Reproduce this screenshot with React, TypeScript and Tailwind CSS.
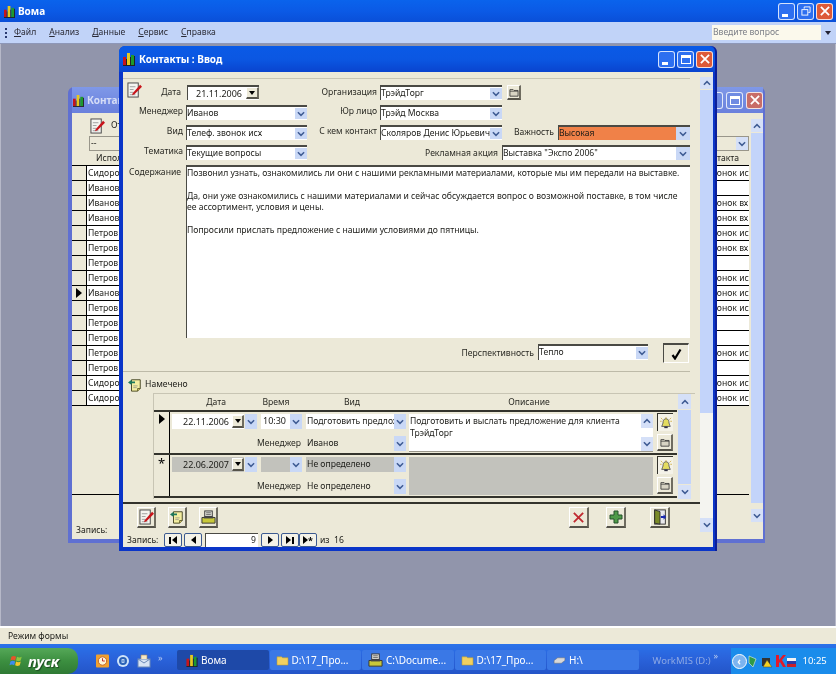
import type { ReactNode } from "react";

function AppIcon({ className = "" }: { className?: string }) {
  return (
    <svg viewBox="0 0 12 14" className={className}>
      <rect x="0" y="13" width="12" height="1" fill="#222" />
      <rect x="0" y="5" width="3" height="8" fill="#c8141a" />
      <rect x="3" y="7" width="1" height="6" fill="#222" />
      <rect x="4" y="1" width="3" height="12" fill="#e8c81c" />
      <rect x="7" y="5" width="1" height="8" fill="#222" />
      <rect x="8" y="3" width="3" height="10" fill="#1e9a2c" />
      <rect x="11" y="4" width="1" height="9" fill="#222" />
    </svg>
  );
}

function Chevron({ up = false, color = "#3f5c94" }: { up?: boolean; color?: string }) {
  return (
    <svg viewBox="0 0 9 6" className="w-[8px] h-[6px]">
      <path d={up ? "M1 5 L4.5 1.5 L8 5" : "M1 1 L4.5 4.5 L8 1"} fill="none" stroke={color} strokeWidth="1.7" />
    </svg>
  );
}

function PencilIcon() {
  return (
    <svg viewBox="0 0 16 17" className="w-[15px] h-[16px]">
      <rect x="1" y="1" width="11" height="15" fill="#f4f4f0" stroke="#444" strokeWidth="1" />
      <path d="M3 5h6M3 8h4M3 11h4M3 13.5h6" stroke="#888" strokeWidth="0.8" />
      <path d="M6 12 L14 3 L16 5 L8 13 L5.5 14 Z" fill="#c8141a" />
    </svg>
  );
}

function NoteIcon() {
  return (
    <svg viewBox="0 0 16 16" className="w-[14px] h-[14px]">
      <path d="M4 2h10v10l-3 3H4z" fill="#f4eea0" stroke="#3a3a1a" strokeWidth="1" />
      <path d="M11 15v-3h3" fill="#d8c860" stroke="#3a3a1a" strokeWidth="0.8" />
      <path d="M0 5l4-3v2h4v2H4v2z" fill="#1e7a5c" />
      <path d="M6 9h5M6 11h4" stroke="#888" strokeWidth="0.8" />
    </svg>
  );
}

function PrinterIcon() {
  return (
    <svg viewBox="0 0 16 16" className="w-[15px] h-[15px] shrink-0">
      <rect x="4" y="1" width="8" height="6" fill="#e8e8e0" stroke="#333" />
      <path d="M5.5 3h5M5.5 5h5" stroke="#333" strokeWidth="0.8" />
      <path d="M1 8h14v6H1z" fill="#c8c83a" stroke="#333" />
      <rect x="3" y="7" width="10" height="2" fill="#444" />
    </svg>
  );
}

function FolderIcon() {
  return (
    <svg viewBox="0 0 12 11" className="w-[10px] h-[9px]">
      <path d="M1 2h4l1 1h5v7H1z" fill="#d8d4c4" stroke="#333" strokeWidth="1" />
      <path d="M1 4h10" stroke="#333" strokeWidth="0.8" />
    </svg>
  );
}

function BellIcon() {
  return (
    <svg viewBox="0 0 14 14" className="w-[12px] h-[12px]">
      <path d="M7 2c3 0 3.500 3 3.500 5 0 1.500 1.500 3 1.500 4H2c0-1 1.500-2.500 1.500-4C3.500 5 4 2 7 2z" fill="#e4dc60" stroke="#445" strokeWidth="0.9" />
      <path d="M1 1l2 2M13 1l-2 2M7 0v2M0 5h2M12 5h2" stroke="#c8a020" strokeWidth="0.8" />
      <rect x="5" y="11" width="4" height="2" fill="#334" />
    </svg>
  );
}

function DoorIcon() {
  return (
    <svg viewBox="0 0 18 18" className="w-[16px] h-[16px]">
      <rect x="3" y="1" width="12" height="16" fill="#e8e8ec" stroke="#2a2a2a" />
      <path d="M3 1l6 2v14l-6-1z" fill="#7a8a28" stroke="#2a2a2a" />
      <path d="M10 8h3V6l3 3-3 3v-2h-3z" fill="#1a2ab0" />
    </svg>
  );
}

function RaisedBtn({ className, children }: { className: string; children: ReactNode }) {
  return (
    <div className={`flex items-center justify-center bg-[#ece9d8] border-t border-l border-t-white border-l-white border-r-2 border-b-2 border-r-[#6f6c60] border-b-[#55534a] ${className}`}>
      {children}
    </div>
  );
}

function Combo({ className, value }: { className: string; value?: string }) {
  return (
    <div className={`flex shrink-0 border-t-2 border-l border-[#4a4a44] bg-white ${className}`}>
      <span className="flex-1 min-w-0 overflow-hidden whitespace-nowrap leading-[13px]">{value}</span>
      <span className="w-[12px] my-[1px] flex items-center justify-center bg-[#c9d8f6]">
        <Chevron />
      </span>
    </div>
  );
}

function DateField({ value, className, fill = "bg-white" }: { value: string; className: string; fill?: string }) {
  return (
    <div className={`flex shrink-0 items-center ${fill} ${className}`}>
      <span className="flex-1 text-right pr-[3px] text-[9px]">{value}</span>
      <RaisedBtn className="w-[12px] h-[13px]">
        <span className="w-0 h-0 border-x-[3px] border-x-transparent border-t-[4px] border-t-black" />
      </RaisedBtn>
    </div>
  );
}

function Label({ className, children }: { className: string; children: ReactNode }) {
  return <div className={`shrink-0 text-right whitespace-nowrap text-[#2a2a24] ${className}`}>{children}</div>;
}

function TitleBtn({ kind, faded = false }: { kind: "min" | "max" | "restore" | "close"; faded?: boolean }) {
  const bg =
    kind === "close"
      ? faded
        ? "bg-[#c86d68]"
        : "bg-[#dd5a38]"
      : faded
        ? "bg-[#6f8be2]"
        : "bg-[#2d6ff0]";
  return (
    <div className={`w-[17px] h-[17px] rounded-[3px] border border-white/80 flex items-center justify-center shrink-0 ${bg}`}>
      {kind === "min" && <span className="w-[6px] h-[3px] bg-white self-end mb-[2px] mr-[4px]" />}
      {kind === "max" && <span className="w-[10px] h-[9px] border border-white border-t-[3px]" />}
      {kind === "restore" && (
        <svg viewBox="0 0 11 11" className="w-[10px] h-[10px]">
          <path d="M3.500 3V1h6.500v6H8" fill="none" stroke="#fff" />
          <rect x="1" y="4" width="6.500" height="6" fill="none" stroke="#fff" />
        </svg>
      )}
      {kind === "close" && (
        <svg viewBox="0 0 11 11" className="w-[10px] h-[10px]">
          <path d="M1 1l9 9M10 1l-9 9" stroke="#fff" strokeWidth="2" />
        </svg>
      )}
    </div>
  );
}

function ArrowBox({ up = false, className = "h-[13px]" }: { up?: boolean; className?: string }) {
  return (
    <div className={`w-[12px] flex items-center justify-center bg-[#d5e0f8] shrink-0 ${className}`}>
      <Chevron up={up} />
    </div>
  );
}

function NavBtn({ children }: { children: ReactNode }) {
  return (
    <div className="w-[18px] h-[14px] flex items-center justify-center rounded-[2px] border border-[#3c5a90] bg-[#f4f2e8] text-[9px] leading-none text-black font-bold">
      {children}
    </div>
  );
}

function NavPointer({ left = false, bar }: { left?: boolean; bar?: "before" | "after" }) {
  return (
    <span className="flex items-center gap-[1px]">
      {bar === "before" && <span className="w-[2px] h-[7px] bg-black" />}
      <span className={`w-0 h-0 border-y-[4px] border-y-transparent ${left ? "border-r-[5px] border-r-black" : "border-l-[5px] border-l-black"}`} />
      {bar === "after" && <span className="w-[2px] h-[7px] bg-black" />}
    </span>
  );
}

const backRows = [
  ["Сидоров", "Телеф. звонок исх"],
  ["Иванов", ""],
  ["Иванов", "Телеф. звонок вх"],
  ["Иванов", "Телеф. звонок вх"],
  ["Петров", "Телеф. звонок исх"],
  ["Петров", "Телеф. звонок вх"],
  ["Петров", ""],
  ["Петров", "Телеф. звонок исх"],
  ["Иванов", "Телеф. звонок исх"],
  ["Петров", "Телеф. звонок исх"],
  ["Петров", ""],
  ["Петров", ""],
  ["Петров", "Телеф. звонок исх"],
  ["Петров", ""],
  ["Сидоров", "Телеф. звонок исх"],
  ["Сидоров", "Телеф. звонок исх"],
];

function BackWindow() {
  return (
    <div className="absolute left-[67px] top-[43px] w-[697px] h-[456px] rounded-t-[6px] bg-[#5f70d2] pl-[4px] pr-[2px] pb-[4px] flex flex-col">
      <div className="h-[26px] flex items-center text-white/70 font-bold text-[10px] gap-[3px] bg-gradient-to-b from-[#7f98e8] to-[#6a80dc]">
        <AppIcon className="w-[11px] h-[13px] ml-[1px]" />
        <span className="flex-1">Контакты</span>
        <TitleBtn kind="min" faded />
        <TitleBtn kind="max" faded />
        <TitleBtn kind="close" faded />
      </div>
      <div className="flex-1 bg-[#ece9d8] flex">
        <div className="flex-1 min-w-0 flex flex-col mr-[2px]">
          <div className="pl-[18px] pt-[3px] flex items-center gap-[6px] h-[22px]">
            <PencilIcon />
            <span>От</span>
          </div>
          <div className="flex ml-[17px] mt-[1px] h-[15px] border border-[#99968a] bg-[#ece9d8]">
            <span className="flex-1 leading-[13px] pl-[1px]">--</span>
            <span className="w-[12px] flex items-center justify-center bg-[#d5e0f8]"><Chevron /></span>
          </div>
          <div className="flex h-[13px] mt-[1px] leading-[13px]">
            <span className="pl-[24px] flex-1">Исполнитель</span>
            <span className="w-[71px] text-right pr-[10px]">Вид контакта</span>
          </div>
          <div className="border-t border-t-black">
            {backRows.map(([name, call], i) => (
              <div key={i} className="flex h-[15px] border-b border-b-black bg-white leading-[14px]">
                <div className="w-[15px] bg-[#ece9d8] border-r border-r-black flex items-center justify-center">
                  {i === 8 && <span className="w-0 h-0 border-y-[5px] border-y-transparent border-l-[6px] border-l-black" />}
                </div>
                <div className="flex-1 pl-[1px]">{name}</div>
                <div className="w-[71px] overflow-hidden whitespace-nowrap">{call}</div>
              </div>
            ))}
          </div>
          <div className="flex-1 border-b border-b-black mb-[29px]" />
          <div className="pl-[4px] pb-[2px] leading-[13px]">Запись:</div>
        </div>
        <div className="w-[12px] mt-[6px] mb-[17px] flex flex-col">
          <ArrowBox up />
          <div className="flex-1 bg-[#c3d4fa] my-[1px]" />
          <div className="h-[5px]" />
          <ArrowBox />
        </div>
      </div>
    </div>
  );
}

function PlannedRow({
  marker,
  date,
  time,
  kind,
  manager,
  grey = false,
}: {
  marker: ReactNode;
  date: string;
  time?: string;
  kind: string;
  manager: string;
  grey?: boolean;
}) {
  const fill = grey ? "bg-[#c2c2bc]" : "bg-white";
  return (
    <div className="flex h-[43px] border-b-2 border-b-[#33332c]">
      <div className="w-[16px] border-r border-r-black flex justify-center pt-[2px]">{marker}</div>
      <div className="w-[238px] pl-[2px] pt-[2px] flex flex-col gap-[7px]">
        <div className="flex gap-[1px] h-[15px]">
          <DateField value={date} fill={fill} className="w-[72px]" />
          <span className="w-[12px] flex items-center justify-center bg-[#c9d8f6] shrink-0"><Chevron /></span>
          <div className={`flex w-[41px] ml-[3px] shrink-0 ${fill}`}>
            <span className="flex-1 pl-[2px] leading-[14px] text-[9px]">{time}</span>
            <span className="w-[12px] flex items-center justify-center bg-[#c9d8f6]"><Chevron /></span>
          </div>
          <div className={`flex w-[100px] ml-[3px] shrink-0 ${fill}`}>
            <span className="flex-1 min-w-0 overflow-hidden whitespace-nowrap pl-[1px] leading-[14px]">{kind}</span>
            <span className="w-[12px] flex items-center justify-center bg-[#c9d8f6]"><Chevron /></span>
          </div>
        </div>
        <div className="flex h-[15px] items-center">
          <Label className="w-[129px]">Менеджер</Label>
          <div className="flex w-[100px] ml-[5px] h-[15px] shrink-0 bg-[#ece9d8]">
            <span className="flex-1 min-w-0 pl-[1px] leading-[14px]">{manager}</span>
            <span className="w-[12px] flex items-center justify-center bg-[#c9d8f6]"><Chevron /></span>
          </div>
        </div>
      </div>
      <div className={`w-[244px] ml-[1px] mt-[2px] h-[38px] flex ${grey ? "bg-[#c2c2bc]" : "bg-white border-b border-b-[#99968a]"}`}>
        {!grey && (
          <>
            <p className="flex-1 pl-[1px] pt-[1px] leading-[12px]">
              Подготовить и выслать предложение для клиента
              <br />
              ТрэйдТорг
            </p>
            <div className="w-[12px] flex flex-col justify-between">
              <ArrowBox up className="h-[14px]" />
              <ArrowBox className="h-[14px]" />
            </div>
          </>
        )}
      </div>
      <div className="flex flex-col gap-[3px] ml-[4px] pt-[1px]">
        <div className="w-[16px] h-[18px] flex items-center justify-center border-t border-l border-[#33332c] bg-[#f4f2e8]">
          <BellIcon />
        </div>
        <RaisedBtn className="w-[16px] h-[17px]">
          <FolderIcon />
        </RaisedBtn>
      </div>
    </div>
  );
}

function MainWindow() {
  return (
    <div className="absolute left-[118px] top-[2px] w-[598px] h-[505px] rounded-t-[6px] bg-[#0a35c8] flex flex-col border-r-2 border-r-[#0c1f98] pl-[4px] pr-[2px] pb-[4px]">
      <div className="h-[26px] -ml-[4px] -mr-[2px] pl-[4px] pr-[2px] rounded-t-[6px] flex items-center gap-[2px] text-white font-bold text-[10px] bg-gradient-to-b from-[#0a5ae6] via-[#0b57e2] to-[#0a44cf]">
        <AppIcon className="w-[12px] h-[14px]" />
        <span className="flex-1 ml-[2px]">Контакты : Ввод</span>
        <TitleBtn kind="min" />
        <TitleBtn kind="max" />
        <TitleBtn kind="close" />
      </div>
      <div className="flex-1 min-h-0 bg-[#ece9d8] flex">
        <div className="w-[577px] flex flex-col">
          <div className="mt-[6px] mr-[10px] border-t border-t-[#c8c5b4]" />
          <div className="flex h-[15px] mt-[6px] items-center">
            <div className="pl-[4px] w-[24px] shrink-0 -mt-[6px]"><PencilIcon /></div>
            <Label className="w-[34px]">Дата</Label>
            <div className="ml-[6px] w-[72px] h-[15px] flex shrink-0 bg-white border-t-2 border-l border-[#4a4a44]">
              <span className="flex-1 text-right pr-[4px] leading-[13px] text-[9px]">21.11.2006</span>
              <RaisedBtn className="w-[13px] h-[12px]">
                <span className="w-0 h-0 border-x-[3px] border-x-transparent border-t-[4px] border-t-black" />
              </RaisedBtn>
            </div>
            <Label className="w-[118px]">Организация</Label>
            <Combo className="ml-[3px] w-[122px] h-[15px]" value="ТрэйдТорг" />
            <RaisedBtn className="ml-[5px] w-[14px] h-[15px]"><FolderIcon /></RaisedBtn>
          </div>
          <div className="flex h-[15px] mt-[5px]">
            <Label className="w-[60px]">Менеджер</Label>
            <Combo className="ml-[3px] w-[121px] h-[15px]" value="Иванов" />
            <Label className="w-[70px]">Юр лицо</Label>
            <Combo className="ml-[3px] w-[122px] h-[15px]" value="Трэйд Москва" />
          </div>
          <div className="flex h-[15px] mt-[5px]">
            <Label className="w-[60px]">Вид</Label>
            <Combo className="ml-[3px] w-[121px] h-[15px]" value="Телеф. звонок исх" />
            <Label className="w-[70px]">С кем контакт</Label>
            <Combo className="ml-[3px] w-[122px] h-[15px]" value="Сколяров Денис Юрьевич" />
            <Label className="w-[52px] mt-[1px]">Важность</Label>
            <div className="ml-[4px] w-[132px] h-[15px] flex border-t-2 border-l border-[#4a4a44]">
              <span className="flex-1 leading-[13px] bg-[#f08148]">Высокая</span>
              <span className="w-[14px] flex items-center justify-center bg-[#c9d8f6]"><Chevron /></span>
            </div>
          </div>
          <div className="flex h-[15px] mt-[5px]">
            <Label className="w-[60px]">Тематика</Label>
            <Combo className="ml-[3px] w-[121px] h-[15px]" value="Текущие вопросы" />
            <Label className="w-[191px] mt-[2px]">Рекламная акция</Label>
            <div className="ml-[4px] w-[188px] h-[15px] flex bg-white border-t-2 border-l border-[#4a4a44]">
              <span className="flex-1 leading-[13px]">Выставка "Экспо 2006"</span>
              <span className="w-[14px] flex items-center justify-center bg-[#c9d8f6]"><Chevron /></span>
            </div>
          </div>
          <div className="flex h-[173px] mt-[5px]">
            <Label className="w-[58px] pt-[1px]">Содержание</Label>
            <div className="ml-[5px] w-[504px] h-[173px] bg-white border-t-2 border-l border-[#4a4a44] pt-[1px] leading-[11.4px]">
              Позвонил узнать, ознакомились ли они с нашими рекламными материалами, которые мы им передали на выставке.
              <br />
              <br />
              Да, они уже ознакомились с нашими материалами и сейчас обсуждается вопрос о возможной поставке, в том числе
              <br />
              ее ассортимент, условия и цены.
              <br />
              <br />
              Попросили прислать предложение с нашими условиями до пятницы.
            </div>
          </div>
          <div className="flex h-[20px] mt-[6px] items-start">
            <Label className="w-[411px] pt-[3px]">Перспективность</Label>
            <Combo className="ml-[4px] w-[110px] h-[16px]" value="Тепло" />
            <div className="ml-[15px] w-[26px] h-[20px] -mt-[1px] border-t-2 border-l border-[#4a4a44] border-r border-b border-r-white border-b-white flex items-center justify-center">
              <svg viewBox="0 0 11 12" className="w-[11px] h-[12px]">
                <path d="M1.5 7 L4 10.500 L9.500 1.500" fill="none" stroke="#000" strokeWidth="2.2" />
              </svg>
            </div>
          </div>
          <div className="mt-[7px] mr-[10px] border-t border-t-[#bdbaa8]" />
          <div className="flex items-center h-[15px] mt-[5px] pl-[5px] gap-[3px]">
            <NoteIcon />
            <span>Намечено</span>
          </div>
          <div className="ml-[30px] mt-[1px] w-[542px] h-[106px] flex border-t border-l border-[#c8c5b4]">
            <div className="w-[523px]">
              <div className="flex h-[18px] items-center text-[#2a2a24] border-b-2 border-b-[#33332c]">
                <span className="w-[72px] text-right">Дата</span>
                <span className="w-[40px] text-center ml-[30px]">Время</span>
                <span className="w-[40px] text-center ml-[36px]">Вид</span>
                <span className="w-[100px] text-center ml-[107px]">Описание</span>
              </div>
              <PlannedRow
                marker={<span className="w-0 h-0 border-y-[5px] border-y-transparent border-l-[6px] border-l-black" />}
                date="22.11.2006"
                time="10:30"
                kind="Подготовить предложение"
                manager="Иванов"
              />
              <PlannedRow
                marker={<span className="text-[13px] leading-[13px] text-black">*</span>}
                date="22.06.2007"
                kind="Не определено"
                manager="Не определено"
                grey
              />
            </div>
            <div className="w-[13px] ml-[1px] flex flex-col">
              <ArrowBox up className="h-[15px] w-[13px]" />
              <div className="flex-1 bg-[#c3d4fa] my-[1px]" />
              <ArrowBox className="h-[14px] w-[13px]" />
            </div>
          </div>
          <div className="mt-[3px] border-t-2 border-t-[#33332c]" />
          <div className="flex h-[22px] mt-[3px] pl-[14px]">
            <RaisedBtn className="w-[19px] h-[21px]"><PencilIcon /></RaisedBtn>
            <RaisedBtn className="ml-[12px] w-[19px] h-[21px]"><NoteIcon /></RaisedBtn>
            <RaisedBtn className="ml-[12px] w-[19px] h-[21px]"><PrinterIcon /></RaisedBtn>
            <RaisedBtn className="ml-[351px] w-[20px] h-[21px]">
              <svg viewBox="0 0 14 14" className="w-[13px] h-[13px]">
                <path d="M2 2l10 10M12 2L2 12" stroke="#c02a30" strokeWidth="2" />
              </svg>
            </RaisedBtn>
            <RaisedBtn className="ml-[17px] w-[20px] h-[21px]">
              <svg viewBox="0 0 14 14" className="w-[14px] h-[14px]">
                <path d="M5 1h4v4h4v4H9v4H5V9H1V5h4z" fill="#4f9a48" stroke="#24502a" strokeWidth="1" />
              </svg>
            </RaisedBtn>
            <RaisedBtn className="ml-[24px] w-[20px] h-[21px]"><DoorIcon /></RaisedBtn>
          </div>
          <div className="flex h-[14px] mt-[4px] items-center pl-[4px]">
            <span className="w-[37px]">Запись:</span>
            <NavBtn><NavPointer left bar="before" /></NavBtn>
            <div className="ml-[2px]"><NavBtn><NavPointer left /></NavBtn></div>
            <div className="ml-[3px] w-[53px] h-[14px] bg-white border-t border-l border-[#4a4a44] text-right pr-[2px] leading-[13px]">9</div>
            <div className="ml-[3px]"><NavBtn><NavPointer /></NavBtn></div>
            <div className="ml-[2px]"><NavBtn><NavPointer bar="after" /></NavBtn></div>
            <NavBtn><span className="flex items-center"><NavPointer />*</span></NavBtn>
            <span className="ml-[3px]">из&nbsp;&nbsp;16</span>
          </div>
        </div>
        <div className="w-[13px] flex flex-col pt-[5px]">
          <ArrowBox up className="h-[12px] w-[13px]" />
          <div className="h-[323px] mt-[1px] bg-[#c3d4fa]" />
          <div className="h-[105px] bg-[#f4f4f0]" />
          <ArrowBox className="h-[14px] w-[13px]" />
        </div>
        <div className="flex-1 bg-[#ece9d8]" />
      </div>
    </div>
  );
}

function XpFlag() {
  return (
    <svg viewBox="0 0 16 16" className="w-[16px] h-[15px] shrink-0">
      <path d="M2 3c2-1 3-1 5 0l-1 4c-2-1-3-1-5 0z" fill="#e8532a" />
      <path d="M8 3c2 1 3 1 5 0l-1 4c-2 1-3 1-5 0z" fill="#8cc63f" />
      <path d="M1 8c2-1 3-1 5 0l-1 4c-2-1-3-1-5 0z" fill="#3d8bf0" />
      <path d="M7 8c2 1 3 1 5 0l-1 4c-2 1-3 1-5 0z" fill="#f4c62a" />
    </svg>
  );
}

function TaskBtn({ icon, children, active = false }: { icon: ReactNode; children: ReactNode; active?: boolean }) {
  return (
    <div className={`w-[91.5px] h-[20px] shrink-0 rounded-[2px] flex items-center gap-[3px] text-white text-[10px] whitespace-nowrap overflow-hidden ${active ? "bg-[#1e49a8] pl-[9px]" : "bg-[#3a78e6] pl-[6px]"}`}>
      {icon}
      <span>{children}</span>
    </div>
  );
}

function FolderTask() {
  return (
    <svg viewBox="0 0 14 12" className="w-[13px] h-[11px] shrink-0">
      <path d="M1 2h5l1 1h6v8H1z" fill="#f0d060" stroke="#b89a30" strokeWidth="0.6" />
    </svg>
  );
}

function Taskbar() {
  return (
    <div className="h-[30px] flex items-end bg-gradient-to-b from-[#2a72ea] via-[#2a62da] to-[#2355c8] text-white">
      <div className="h-[26px] w-[78px] shrink-0 rounded-r-[10px] bg-gradient-to-b from-[#55a858] via-[#3c8f40] to-[#2f7a34] flex items-center pl-[9px] gap-[3px] italic font-bold text-[15px] [text-shadow:1px_1px_1px_#1c4a20]">
        <XpFlag />
        <span>пуск</span>
      </div>
      <div className="h-[26px] w-[81px] shrink-0 flex items-center ml-[18px] gap-[7px]">
        <svg viewBox="0 0 14 14" className="w-[13px] h-[14px]">
          <rect width="14" height="14" rx="1" fill="#f0a030" />
          <circle cx="7" cy="7" r="4.500" fill="#fdf4d8" stroke="#c06020" />
          <path d="M7 4v3h2.500" stroke="#c02020" fill="none" />
        </svg>
        <svg viewBox="0 0 14 14" className="w-[14px] h-[14px]">
          <circle cx="7" cy="7" r="6" fill="#cfe4fa" />
          <circle cx="7" cy="7" r="3" fill="none" stroke="#2a62b8" strokeWidth="2" />
          <path d="M4 7h6" stroke="#2a62b8" />
        </svg>
        <svg viewBox="0 0 14 14" className="w-[14px] h-[14px]">
          <rect x="1" y="5" width="12" height="8" fill="#d8e4f4" stroke="#6c8ab8" />
          <path d="M1 5l6 4 6-4" fill="none" stroke="#6c8ab8" />
          <path d="M4 5V1h6v4" fill="#f4e8c8" stroke="#a88858" strokeWidth="0.6" />
        </svg>
        <span className="text-[9px] text-[#b8ccf0] -mt-[6px]">»</span>
      </div>
      <div className="h-[26px] flex items-center shrink-0 gap-[1px] pb-[2px]">
        <TaskBtn active icon={<AppIcon className="w-[12px] h-[13px] shrink-0" />}>Вома</TaskBtn>
        <TaskBtn icon={<FolderTask />}>D:\17_Про...</TaskBtn>
        <TaskBtn icon={<PrinterIcon />}>C:\Docume...</TaskBtn>
        <TaskBtn icon={<FolderTask />}>D:\17_Про...</TaskBtn>
        <TaskBtn
          icon={
            <svg viewBox="0 0 14 10" className="w-[13px] h-[9px] shrink-0">
              <path d="M1 5l4-3h8v3l-4 3H1z" fill="#d8d8d8" stroke="#666" strokeWidth="0.5" />
            </svg>
          }
        >
          H:\
        </TaskBtn>
      </div>
      <div className="h-[26px] flex items-center ml-[14px] text-[9.5px] text-[#8ca8e4] w-[61px] shrink-0 whitespace-nowrap">WorkMIS (D:)</div>
      <span className="h-[26px] text-[9px] text-[#b8ccf0] w-[17px] shrink-0 pt-[1px]">»</span>
      <div className="h-[26px] flex-1 flex items-center bg-[#1a8ceb] pl-[1px]">
        <div className="w-[15px] h-[15px] rounded-full bg-[#7cb4f0] border border-white flex items-center justify-center text-white text-[10px] font-bold leading-none">‹</div>
        <svg viewBox="0 0 50 14" className="w-[50px] h-[14px]">
          <path d="M2 2l7 3-3 8-4-4z" fill="#2f9a48" stroke="#e8f0e0" strokeWidth="0.6" />
          <path d="M15 4h8v8h-8z" fill="#333" />
          <path d="M20 6l5 7H16z" fill="#f4d020" stroke="#443" strokeWidth="0.5" />
          <path d="M29 1h3v5l4-5h3l-4 5 4 7h-3l-3-5-1 1v4h-3z" fill="#e01a2a" />
          <rect x="40" y="4" width="9" height="3" fill="#f4f4f4" />
          <rect x="40" y="7" width="9" height="3" fill="#2a3aa8" />
          <rect x="40" y="10" width="9" height="3" fill="#c8202a" />
        </svg>
        <span className="ml-[6px] text-[9.5px]">10:25</span>
      </div>
    </div>
  );
}

export default function App() {
  return (
    <div className="w-[836px] h-[674px] overflow-hidden flex flex-col font-['Noto_Sans',sans-serif] text-[8.6px] text-[#1c1c18] bg-[#9195ab] [filter:blur(0.4px)]">
      <div className="h-[22px] flex items-center pl-[4px] pr-[3px] gap-[2px] text-white font-bold text-[10px] bg-gradient-to-b from-[#0a63ec] via-[#0b5ae6] to-[#0a4fd8]">
        <AppIcon className="w-[11px] h-[13px]" />
        <span className="flex-1 ml-[1px]">Вома</span>
        <TitleBtn kind="min" />
        <TitleBtn kind="restore" />
        <TitleBtn kind="close" />
      </div>
      <div className="h-[22px] flex items-center bg-[#c1d3f8] border-b border-b-[#8d97b8] pl-[5px] text-[#2a2a34]">
        <span className="w-[2px] h-[10px] border-l-2 border-dotted border-[#2a3a70]" />
        <nav className="flex gap-[13px] ml-[7px] flex-1">
          {["Файл", "Анализ", "Данные", "Сервис", "Справка"].map((m) => (
            <span key={m}>
              <span className="underline">{m[0]}</span>
              {m.slice(1)}
            </span>
          ))}
        </nav>
        <div className="w-[109px] h-[15px] bg-[#fbf9ec] text-[#7d8088] pl-[1px] leading-[15px]">Введите вопрос</div>
        <span className="w-[14px] flex justify-center mr-[1px]">
          <span className="w-0 h-0 border-x-[3px] border-x-transparent border-t-[4px] border-t-[#223]" />
        </span>
      </div>
      <div className="relative flex-1 border-x border-x-[#b6b8c8]">
        <BackWindow />
        <MainWindow />
      </div>
      <div className="h-[18px] bg-[#ece9d8] border-t-2 border-t-white flex items-center pl-[8px]">Режим формы</div>
      <Taskbar />
    </div>
  );
}
